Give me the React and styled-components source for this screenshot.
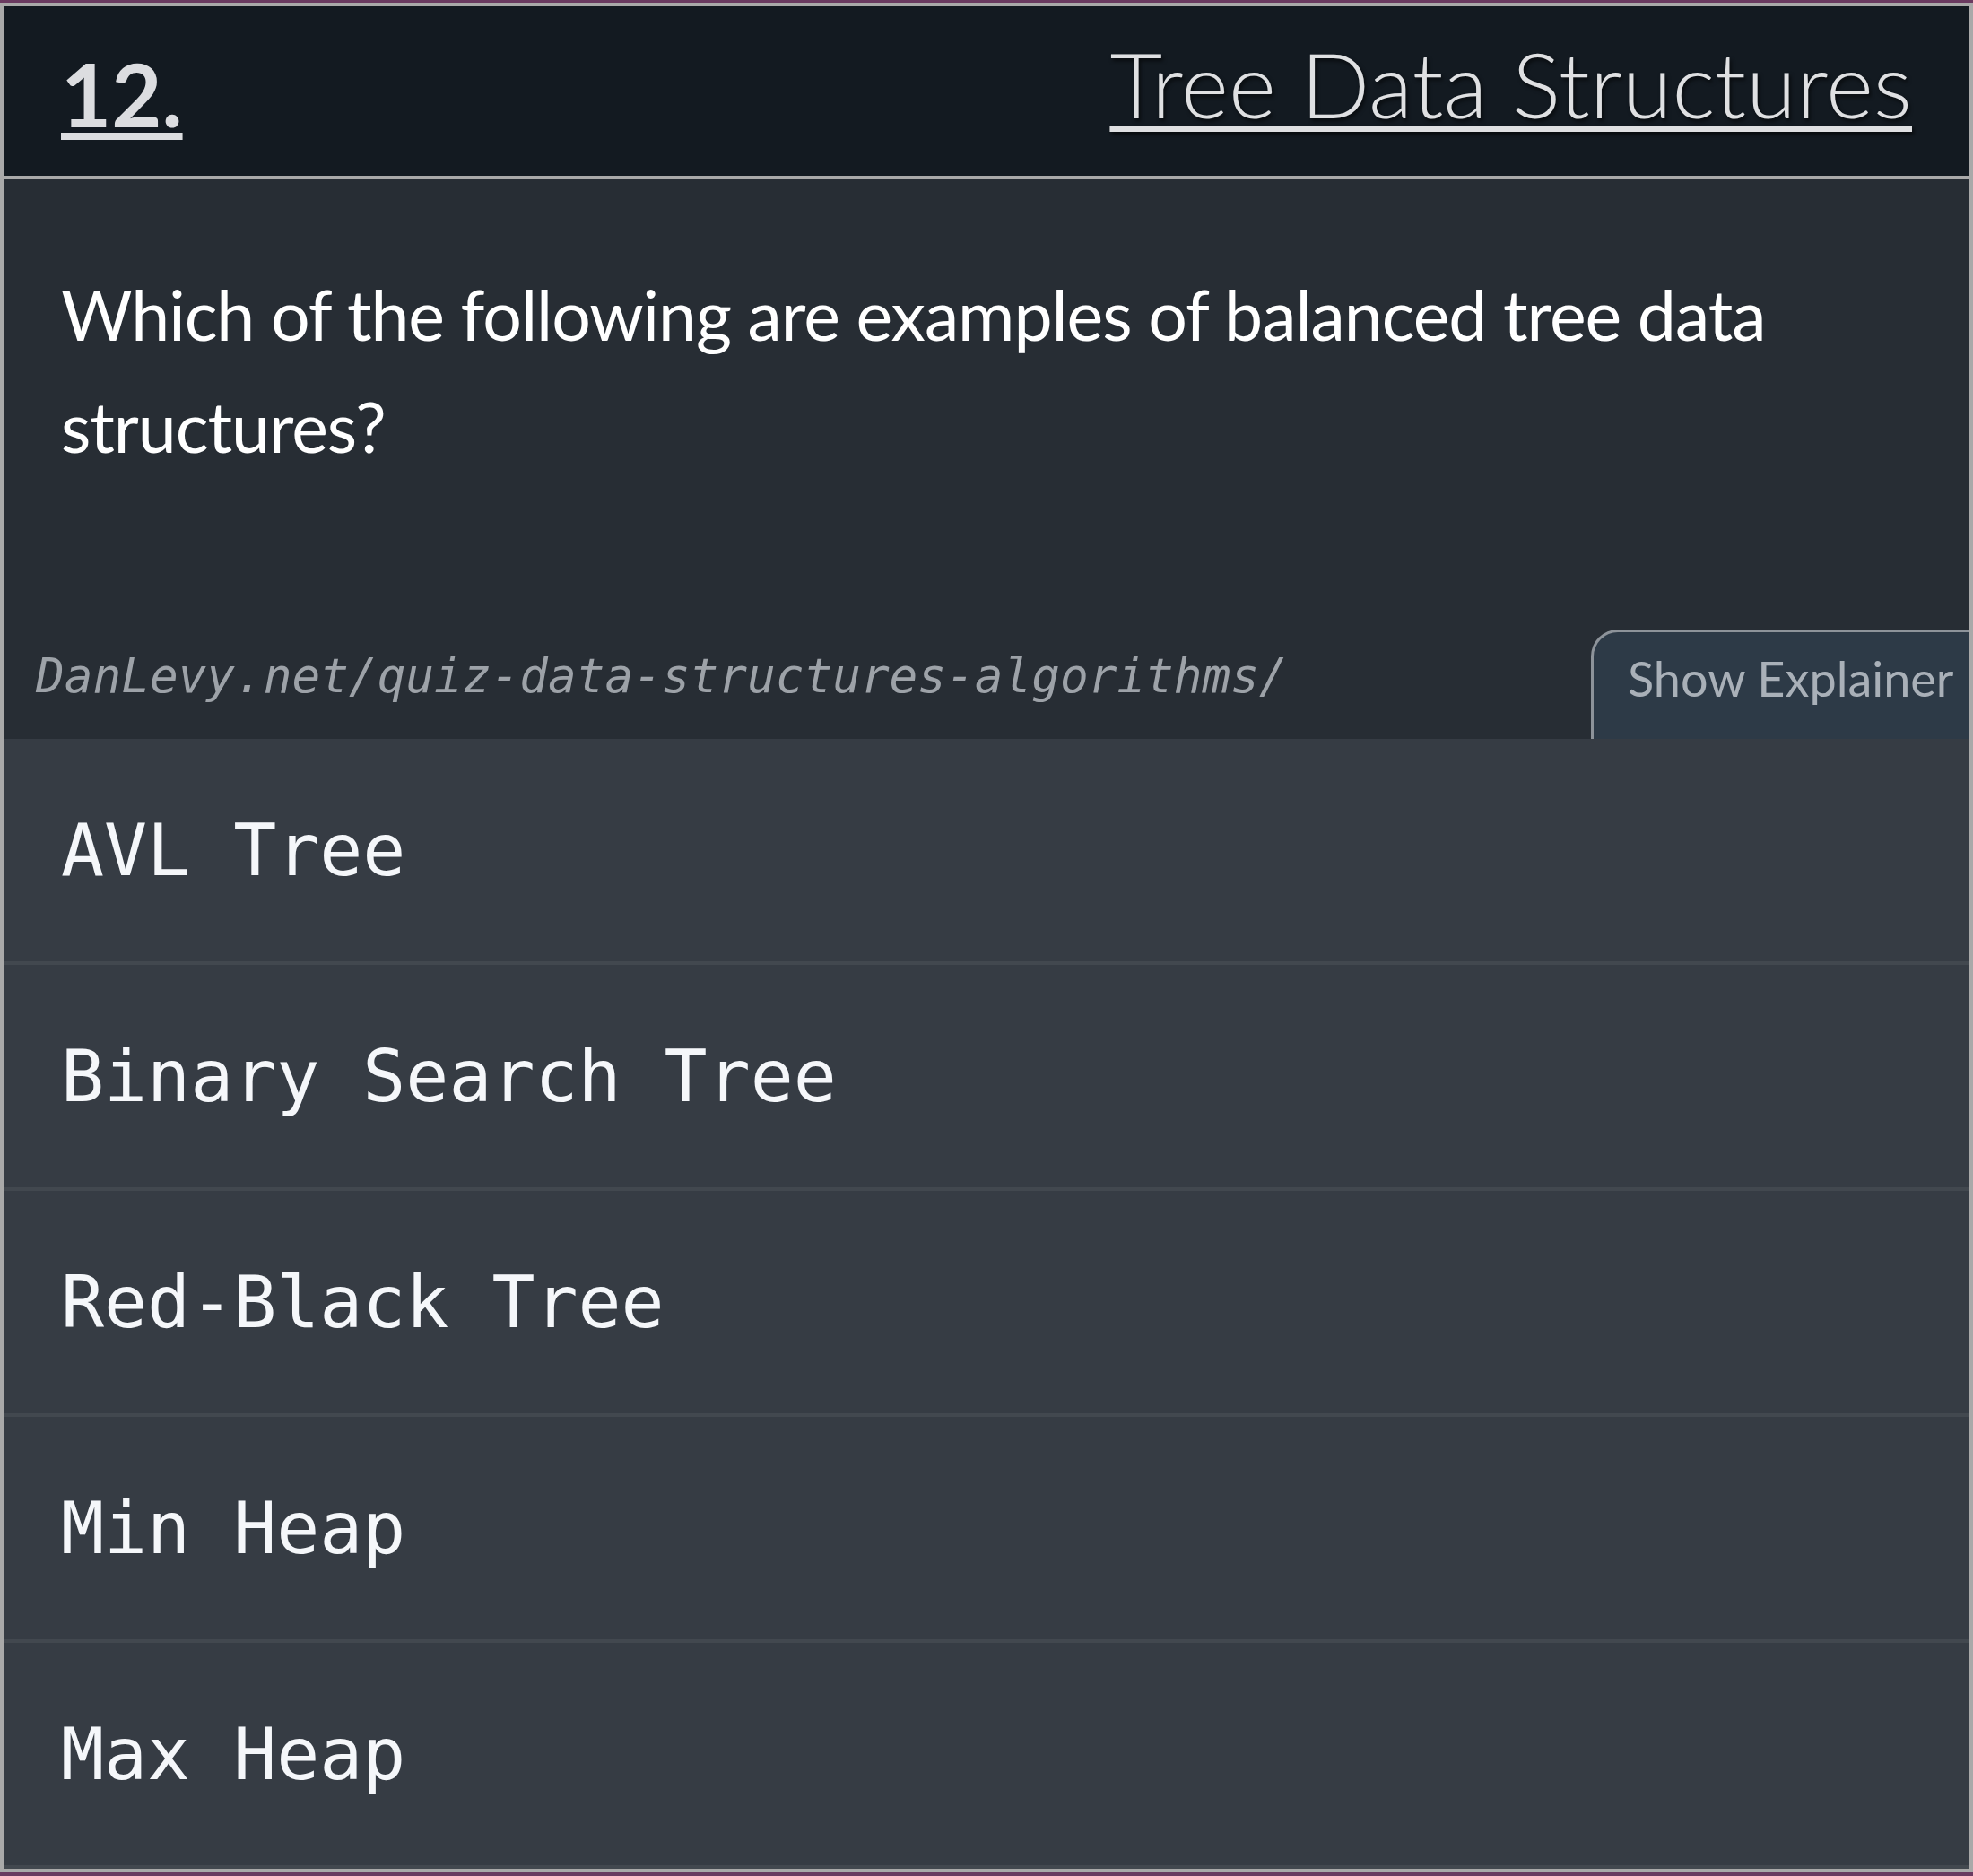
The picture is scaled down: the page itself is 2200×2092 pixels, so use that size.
import React from 'react';
import styled, { createGlobalStyle } from 'styled-components';

const GlobalStyle = createGlobalStyle`
  html, body {
    margin: 0;
    padding: 0;
  }
  body {
    background: #6a3a60;
    padding: 3px 0 4px;
    font-family: Lato, "Open Sans", sans-serif;
  }
`;

const Card = styled.section`
  border: 4px solid #a9a9a9;
  background: #272d34;
  overflow: hidden;
`;

const Header = styled.header`
  display: flex;
  align-items: center;
  justify-content: space-between;
  height: 189px;
  padding: 0 64px;
  background: #131a21;
  border-bottom: 4px solid #a9a9a9;
`;

const Number = styled.a`
  margin-top: 6px;
  font-family: Lato, sans-serif;
  font-weight: 700;
  font-size: 97px;
  color: #dcdde0;
  text-decoration: underline;
  text-decoration-thickness: 8px;
  text-underline-offset: 6px;
`;

const Title = styled.a`
  margin-bottom: 18px;
  font-family: Lato, sans-serif;
  font-weight: 300;
  font-size: 101.5px;
  color: #dfe0e2;
  text-shadow: 2px 3px 4px rgba(0, 0, 0, 0.6);
  text-decoration: underline;
  text-decoration-thickness: 7px;
  text-underline-offset: 8px;
`;

const QuestionArea = styled.div`
  display: flex;
  flex-direction: column;
`;

const Question = styled.p`
  margin: 0;
  padding: 88px 64px 0;
  font-size: 77px;
  letter-spacing: -1.05px;
  line-height: 125px;
  font-weight: 400;
  color: #ffffff;
`;

const Footer = styled.div`
  display: flex;
  align-items: flex-end;
  justify-content: space-between;
  margin-top: 164px;
  height: 122px;
`;

const SourceLink = styled.span`
  margin: 0 0 40px 36px;
  font-family: "DejaVu Sans Mono", "Liberation Mono", monospace;
  font-style: italic;
  font-size: 52.7px;
  color: #9da2a8;
`;

const ExplainerButton = styled.button`
  box-sizing: border-box;
  width: 422px;
  height: 122px;
  padding: 20px 0 0 38px;
  display: flex;
  align-items: flex-start;
  background: #2d3a47;
  border: 3px solid #8d939a;
  border-right: none;
  border-bottom: none;
  border-top-left-radius: 30px;
  font-family: Lato, sans-serif;
  font-size: 54px;
  line-height: 1.2;
  color: #a9b0b8;
  white-space: nowrap;
`;

const Options = styled.ul`
  list-style: none;
  margin: 0;
  padding: 0;
`;

const Option = styled.li`
  display: flex;
  align-items: center;
  height: 248px;
  padding: 0 64px;
  background: #363c44;
  border-bottom: 4px solid #42484f;
  font-family: "DejaVu Sans Mono", "Liberation Mono", monospace;
  font-size: 79.8px;
  color: #f5f7fa;
  white-space: pre;
`;

const options = ['AVL Tree', 'Binary Search Tree', 'Red-Black Tree', 'Min Heap', 'Max Heap'];

export default function App() {
  return (
    <>
      <GlobalStyle />
      <Card>
        <Header>
          <Number href="#12">12.</Number>
          <Title href="#tree-data-structures">Tree Data Structures</Title>
        </Header>
        <QuestionArea>
          <Question>Which of the following are examples of balanced tree data structures?</Question>
          <Footer>
            <SourceLink>DanLevy.net/quiz-data-structures-algorithms/</SourceLink>
            <ExplainerButton type="button">Show Explainer</ExplainerButton>
          </Footer>
        </QuestionArea>
        <Options>
          {options.map(opt => (
            <Option key={opt}>{opt}</Option>
          ))}
        </Options>
      </Card>
    </>
  );
}
